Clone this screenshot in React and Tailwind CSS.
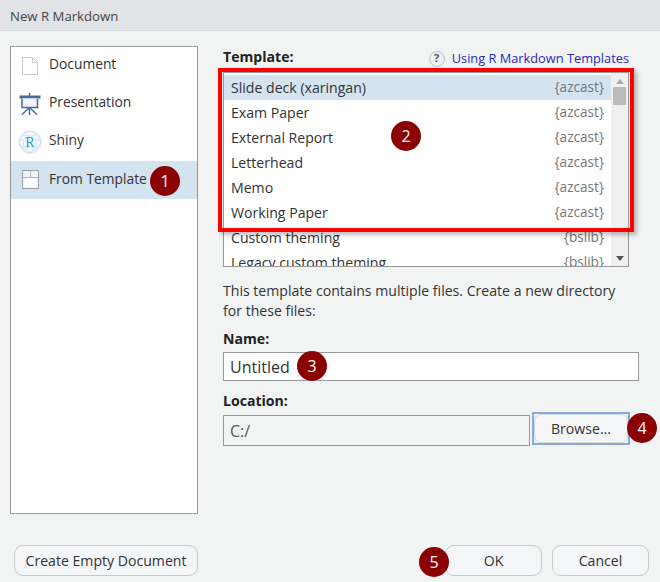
const templates = [
  { name: "Slide deck (xaringan)", pkg: "{azcast}", selected: true },
  { name: "Exam Paper", pkg: "{azcast}" },
  { name: "External Report", pkg: "{azcast}" },
  { name: "Letterhead", pkg: "{azcast}" },
  { name: "Memo", pkg: "{azcast}" },
  { name: "Working Paper", pkg: "{azcast}" },
  { name: "Custom theming", pkg: "{bslib}" },
  { name: "Legacy custom theming", pkg: "{bslib}" },
];

const DocIcon = () => (
  <svg width="18" height="20" viewBox="0 0 18 20" fill="none">
    <path d="M1.5 1.5H11.5L16.5 6.5V18.5H1.5Z" fill="#fff" stroke="#c4ccd4" />
    <path d="M11.5 1.5V6.5H16.5" stroke="#c4ccd4" />
  </svg>
);

const PresentationIcon = () => (
  <svg width="22" height="22" viewBox="0 0 22 22" fill="none">
    <path d="M10.5 0V3" stroke="#4a6c9b" strokeWidth="1.5" />
    <rect x="0.5" y="2.5" width="21" height="3" fill="#4a6c9b" />
    <path d="M3 5.5V14.5H18.5V5.5" fill="#eef4fb" stroke="#4a6c9b" strokeWidth="1.5" />
    <path d="M10.5 14.5V22M10 15L3 21.5M11 15L18 21.5" stroke="#4a6c9b" strokeWidth="1.5" />
  </svg>
);

const ShinyIcon = () => (
  <svg width="24" height="24" viewBox="0 0 24 24" fill="none">
    <circle cx="12" cy="12" r="11" fill="#f7fbfe" stroke="#b5d3ea" strokeDasharray="2 1" />
    <path
      d="M12 1L5 5L1 12L5 19L12 23L19 19L23 12L19 5ZM5 5L12 6L19 5M1 12L6 9L12 6L18 9L23 12M6 9L5 19M18 9L19 19M6 17L12 23L18 17Z"
      stroke="#c4dcee"
      strokeWidth="0.7"
    />
    <text x="12" y="17" textAnchor="middle" fontSize="14" fill="#1f9bd1" fontFamily="Liberation Serif, serif">
      R
    </text>
  </svg>
);

const TemplateIcon = () => (
  <svg width="17" height="19" viewBox="0 0 17 19" fill="none">
    <rect x="0.5" y="0.5" width="16" height="18" fill="#f2f3f4" stroke="#9aa0a6" />
    <path d="M1 7.5H16M8.5 1V7.5" stroke="#b4b9be" />
    <rect x="2" y="9" width="13" height="8" fill="#fff" />
  </svg>
);

const navItems = [
  { label: "Document", icon: <DocIcon /> },
  { label: "Presentation", icon: <PresentationIcon /> },
  { label: "Shiny", icon: <ShinyIcon /> },
  { label: "From Template", icon: <TemplateIcon />, selected: true },
];

const Badge = ({ n, className }) => (
  <div
    className={`absolute flex h-[30px] w-[30px] items-center justify-center rounded-full bg-[#8b0000] text-[16px] text-white ${className}`}
  >
    {n}
  </div>
);

const Button = ({ children, className = "" }) => (
  <button
    className={`h-[31px] rounded-[9px] border border-[#c6c8ca] bg-[#f5f6f8] text-[#333] ${className}`}
  >
    {children}
  </button>
);

export default function App() {
  return (
    <div
      className="relative flex h-[582px] w-[660px] flex-col overflow-hidden bg-[#f2f4f4] text-[14.1px] text-[#333]"
      style={{ fontFamily: '"Open Sans", "Noto Sans", sans-serif' }}
    >
      {/* Title bar */}
      <div className="flex h-[31px] items-center border-b border-[#d8dadd] bg-[#e2e3e7] pl-[10px] pt-[3px] text-[13.2px] text-[#444]">
        New R Markdown
      </div>

      <div className="flex flex-1 flex-col px-[10px] pt-[15px]">
        <div className="flex h-[468px] gap-[25px]">
          {/* Type list */}
          <div className="w-[188px] border border-[#999] bg-white text-[13.8px]">
            {navItems.map((item) => (
              <div
                key={item.label}
                className={`flex h-[38px] items-center ${item.selected ? "bg-[#d4e3f0]" : ""}`}
              >
                <div className="flex w-[38px] justify-center pb-[1px]">{item.icon}</div>
                <span className={item.selected ? "pb-[2px]" : "pb-[3px]"}>{item.label}</span>
              </div>
            ))}
          </div>

          {/* Template form */}
          <div className="flex w-[416px] flex-col">
            <div className="flex h-[26px] items-start justify-between pr-[10px]">
              <span className="font-bold text-[#222]">Template:</span>
              <span className="flex items-center gap-[7px] pt-[3px] text-[12.8px] text-[#2a2ab8]">
                <span className="flex h-[16px] w-[16px] items-center justify-center rounded-full border border-[#b4c0c8] bg-[#eef1f2] text-[11px] font-bold text-[#555]">
                  ?
                </span>
                Using R Markdown Templates
              </span>
            </div>

            <div className="flex h-[195px] w-[406px] overflow-hidden border border-[#999] bg-white">
              <div className="flex-1 pt-[2px]">
                {templates.map((t) => (
                  <div
                    key={t.name}
                    className={`flex h-[25px] items-center justify-between pl-[7px] pr-[7px] ${t.selected ? "bg-[#d4e3f0]" : ""}`}
                  >
                    <span>{t.name}</span>
                    <span className="text-[13.6px] text-[#777]">{t.pkg}</span>
                  </div>
                ))}
              </div>
              <div className="flex w-[17px] flex-col items-center bg-[#f0f0f0] pt-[2px]">
                <div className="mt-[4px] h-0 w-0 border-x-[4px] border-b-[5px] border-x-transparent border-b-[#aaa]" />
                <div className="mt-[3px] h-[18px] w-[13px] bg-[#bbb]" />
                <div className="mt-auto mb-[5px] h-0 w-0 border-x-[4px] border-t-[5px] border-x-transparent border-t-[#555]" />
              </div>
            </div>

            <p className="mt-[14px] w-[400px] leading-[20px]">
              This template contains multiple files. Create a new directory for these files:
            </p>

            <label className="mt-[7px] font-bold text-[#222]">Name:</label>
            <div className="mt-[3px] flex h-[29px] w-[416px] items-center border border-[#999] bg-white pl-[6px] text-[16px]">
              Untitled
            </div>

            <label className="mt-[9px] font-bold text-[#222]">Location:</label>
            <div className="mt-[3px] flex items-start gap-[2px]">
              <div className="mt-[1px] flex h-[31px] w-[307px] items-center border border-[#999] pl-[6px] text-[16px] text-[#555]">
                C:/
              </div>
              <div className="h-[33px] w-[98px] -translate-y-[2px] border-2 border-[#8aaadb] bg-[#f2f4f4]">
                <button className="h-full w-full rounded-[7px] border border-[#d4d5d8] bg-[#f5f6f8] text-[#333]">
                  Browse...
                </button>
              </div>
            </div>
          </div>
        </div>

        {/* Footer buttons */}
        <div className="mt-[31px] flex items-start">
          <Button className="ml-[4px] w-[184px]">Create Empty Document</Button>
          <Button className="ml-[247px] w-[97px]">OK</Button>
          <Button className="ml-[10px] w-[97px]">Cancel</Button>
        </div>
      </div>

      {/* Annotations over the dialog */}
      <div className="absolute left-[218px] top-[68px] h-[164px] w-[416px] border-4 border-[#f00] shadow-[3px_3px_4px_rgba(0,0,0,0.25)]" />
      <Badge n="1" className="left-[150px] top-[166px]" />
      <Badge n="2" className="left-[391px] top-[121px]" />
      <Badge n="3" className="left-[297px] top-[351px]" />
      <Badge n="4" className="left-[627px] top-[413px]" />
      <Badge n="5" className="left-[419px] top-[547px]" />
    </div>
  );
}
